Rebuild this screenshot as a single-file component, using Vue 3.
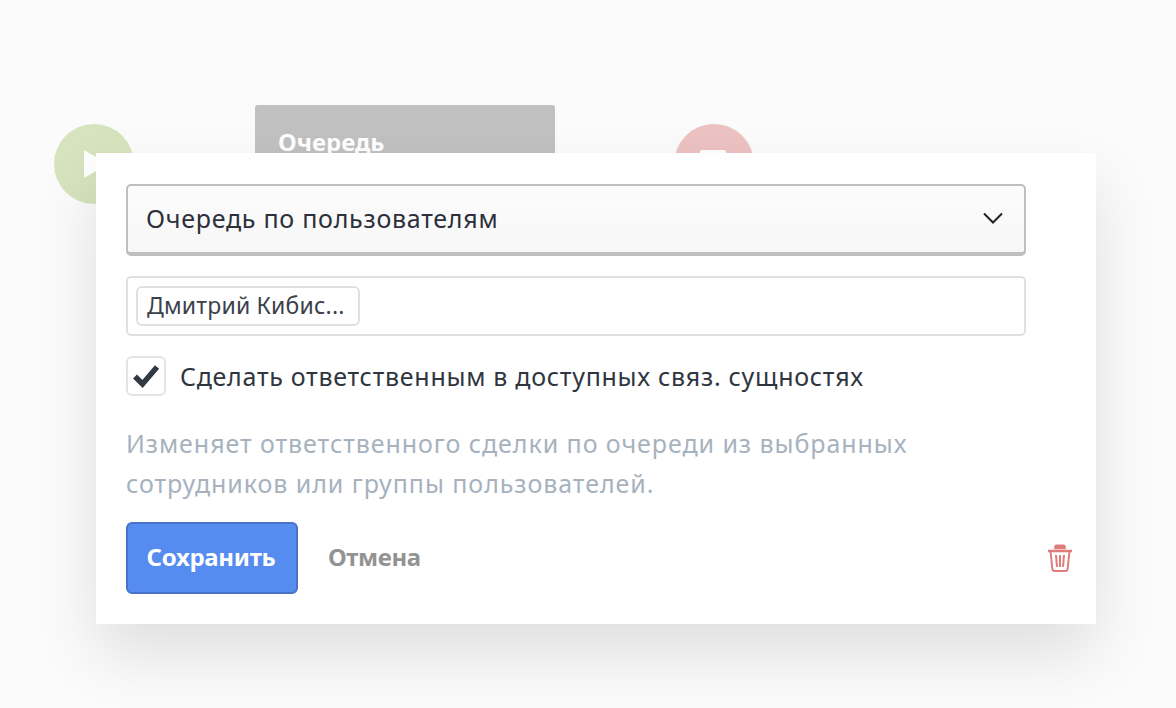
<template>
  <div class="page">
    <div class="canvas">
      <div class="node start"><span class="play"></span></div>
      <div class="node queue"><span class="queue-title">Очередь</span></div>
      <div class="node stop"><span class="stop-mark"></span></div>
    </div>
    <div class="modal">
      <div class="select">
        <span>Очередь по пользователям</span>
        <svg class="chevron" width="22" height="14" viewBox="0 0 22 14"><path d="M2 2.500 11 11.500 20 2.500" fill="none" stroke="#1e2127" stroke-width="2"/></svg>
      </div>
      <div class="tags"><span class="chip">Дмитрий Кибис...</span></div>
      <label class="check">
        <span class="box">
          <svg width="28" height="26" viewBox="0 0 28 26"><path d="M3 13.500 10.500 21 25 4" fill="none" stroke="#313942" stroke-width="5.500"/></svg>
        </span>
        <span>Сделать ответственным в доступных связ. сущностях</span>
      </label>
      <p class="hint">Изменяет ответственного сделки по очереди из выбранных<br>сотрудников или группы пользователей.</p>
      <div class="actions">
        <button class="save">Сохранить</button>
        <button class="cancel">Отмена</button>
        <svg class="trash" width="24" height="28" viewBox="0 0 24 28" fill="none" stroke="#e07c7c" stroke-width="2"><path d="M0 7H24" stroke-width="2.500"/><path d="M7 4.500V2.500Q7 1.200 8.500 1.200H15.500Q17 1.200 17 2.500V4.500H7Z" fill="#e07c7c" stroke-width="1.500"/><path d="M2.500 7 4.300 24.500Q4.500 27 6.500 27H17.500Q19.500 27 19.700 24.500L21.500 7"/><path d="M8 11 9 23M12 11V23M16 11 15 23"/></svg>
      </div>
    </div>
  </div>
</template>

<script setup>
</script>

<style>
html, body { margin: 0; background: #fbfbfb; }
</style>

<style scoped>
.page {
  position: relative;
  width: 1176px;
  height: 708px;
  overflow: hidden;
  background: #fbfbfb;
  padding: 153px 0 0 96px;
  box-sizing: border-box;
  font-family: "Noto Sans", "Open Sans", sans-serif;
  color: #2f3640;
}
.canvas { position: absolute; inset: 0; }
.node { position: absolute; }
.start {
  left: 54px; top: 124px; width: 80px; height: 80px;
  border-radius: 50%;
  background: #d6e3bd;
}
.play {
  position: absolute; left: 30px; top: 26px;
  border-left: 24px solid #fff;
  border-top: 14px solid transparent;
  border-bottom: 14px solid transparent;
}
.queue {
  left: 255px; top: 105px; width: 300px; height: 80px;
  background: #c1c1c1;
  border-radius: 3px;
}
.queue-title {
  position: absolute; left: 23px; top: 21px;
  color: #fff; font-weight: 700; font-size: 24px; line-height: 32px;
}
.stop {
  left: 674px; top: 124px; width: 80px; height: 80px;
  border-radius: 50%;
  background: #ecc2c2;
}
.stop-mark {
  position: absolute; left: 26px; top: 26px; width: 26px; height: 26px;
  background: #fff; border-radius: 2px;
}
.modal {
  position: relative;
  width: 1000px;
  height: 471px;
  box-sizing: border-box;
  padding: 31px 30px 0;
  background: #fff;
  box-shadow: 0 30px 60px rgba(0, 0, 0, 0.115);
}
.select {
  width: 900px; height: 72px;
  box-sizing: border-box;
  display: flex; align-items: center; justify-content: space-between;
  padding: 0 20px 2px 18px;
  border: 2px solid #bfbfbf;
  border-bottom-width: 4px;
  border-radius: 5px;
  background: linear-gradient(#fcfcfc, #f7f7f7);
  font-size: 25px;
  letter-spacing: 0.74px;
  color: #2b303a;
}
.tags {
  width: 900px; height: 60px;
  margin-top: 20px;
  box-sizing: border-box;
  border: 2px solid #e0e0e0;
  border-radius: 5px;
  padding: 8px;
  display: flex; align-items: flex-start;
}
.chip {
  height: 40px;
  box-sizing: border-box;
  width: 224px;
  display: flex; align-items: center;
  padding: 0 9px 2px;
  border: 2px solid #e0e0e0;
  border-radius: 6px;
  font-size: 23px;
  letter-spacing: 0.2px;
  color: #3a414b;
  white-space: nowrap;
}
.check {
  margin-top: 20px;
  display: flex; align-items: center; gap: 14px;
  font-size: 25px; line-height: 40px;
  letter-spacing: 0.72px;
  color: #2f3640;
}
.box {
  width: 40px; height: 40px;
  box-sizing: border-box;
  border: 2px solid #e4e4e4;
  border-radius: 6px;
  display: flex; align-items: center; justify-content: center;
}
.hint {
  margin: 27px 0 0;
  font-size: 25px; line-height: 40px;
  letter-spacing: 0.94px;
  color: #a7b2bf;
}
.actions {
  margin-top: 19px;
  display: flex; align-items: center;
}
.save {
  width: 172px; height: 72px;
  border: 2px solid #4a72c9;
  border-radius: 6px;
  background: #568bf0;
  color: #fff;
  font: 700 24px "Noto Sans", sans-serif;
  letter-spacing: -0.3px;
  padding: 0 2px 4px 0;
}
.cancel {
  margin-left: 30px;
  border: 0; padding: 0 0 4px; background: none;
  color: #939393;
  font: 700 24px "Noto Sans", sans-serif;
  letter-spacing: -0.35px;
}
.trash { margin-left: auto; margin-right: -6px; }
</style>
